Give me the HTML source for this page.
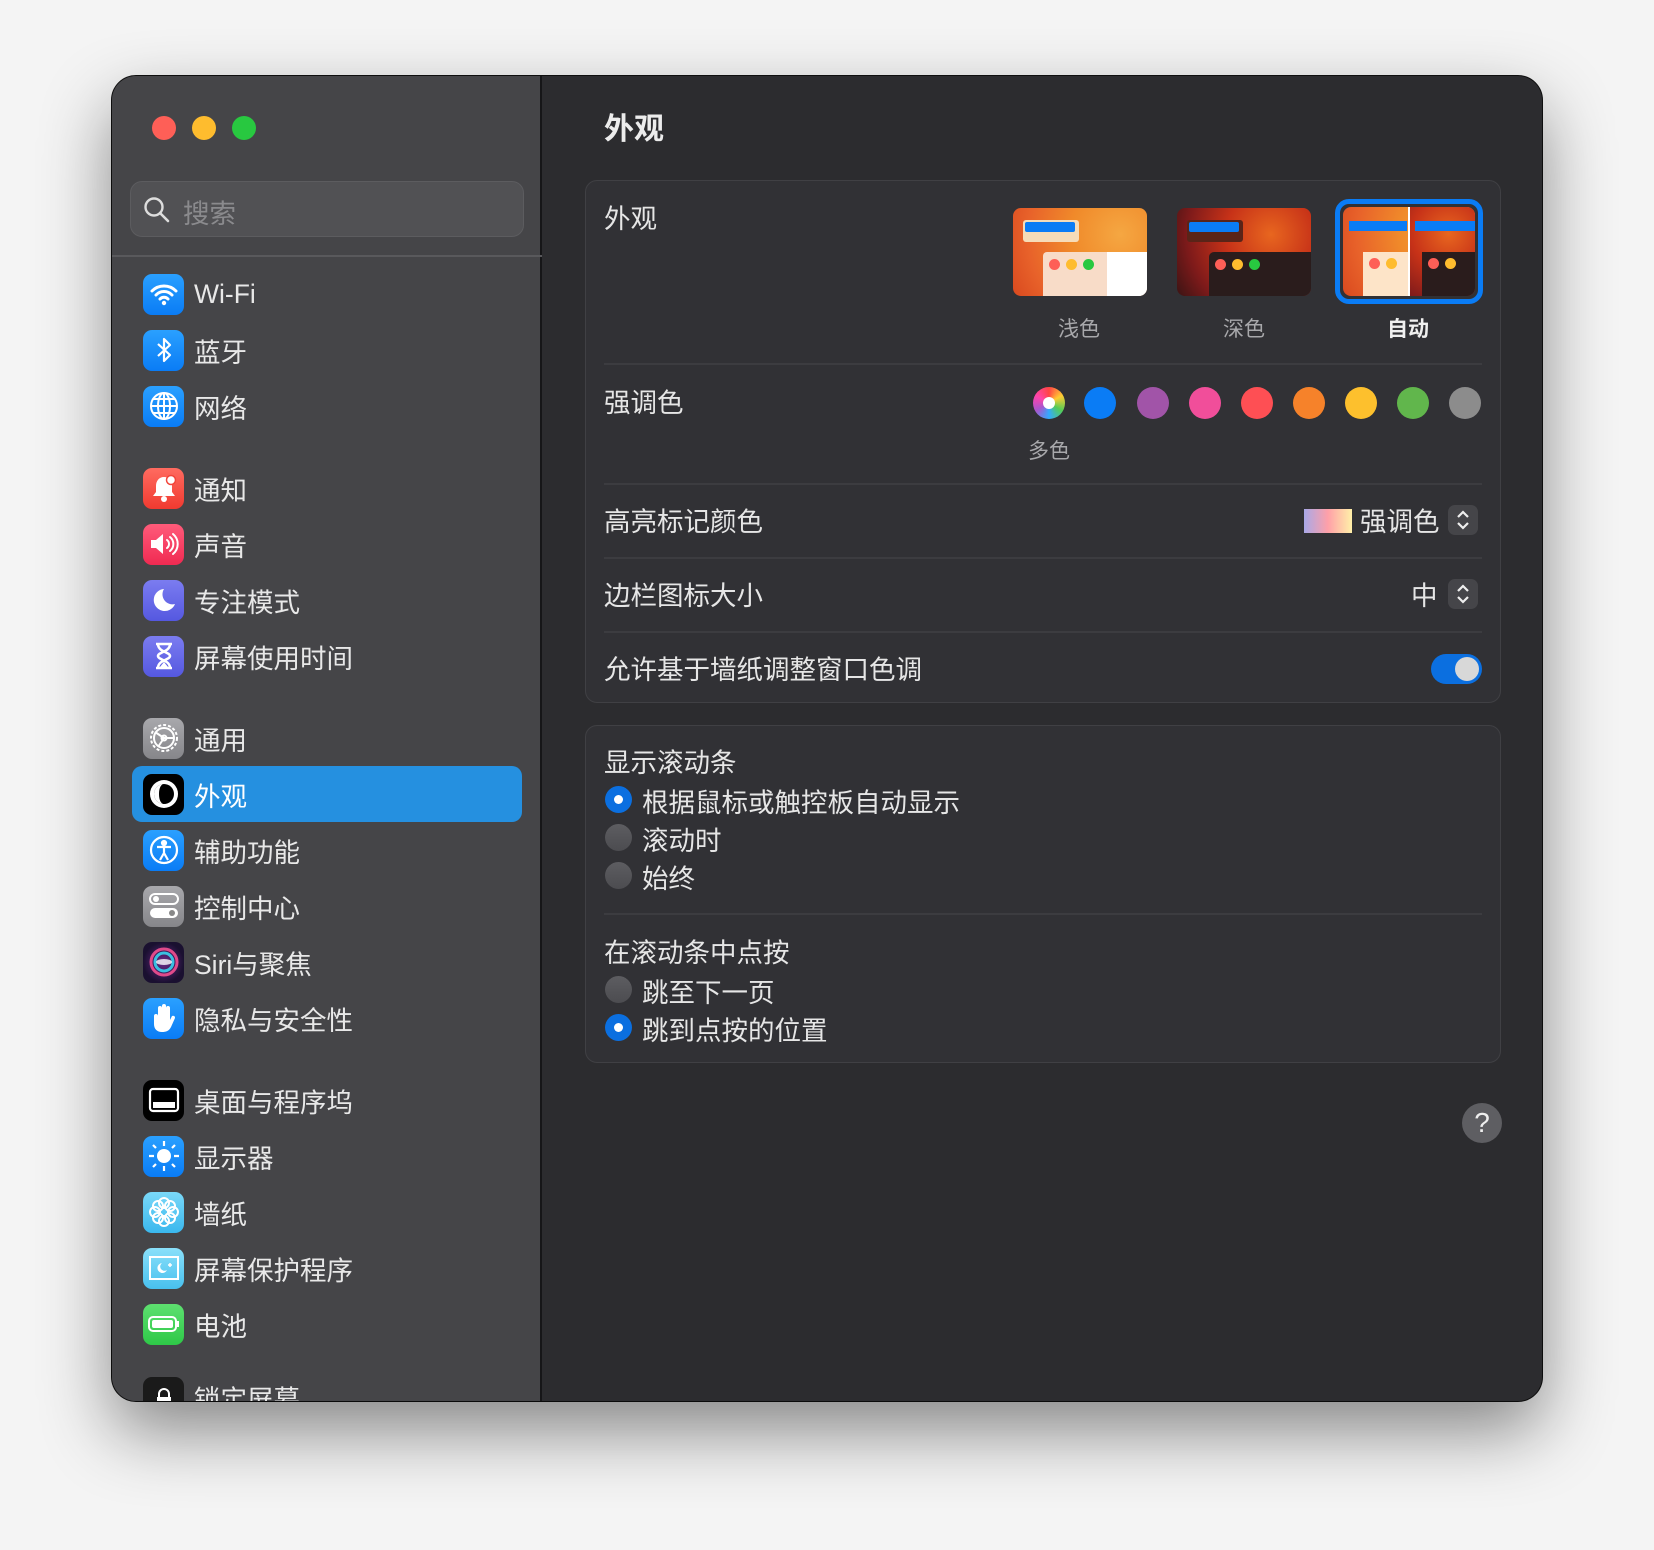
<!DOCTYPE html>
<html><head><meta charset="utf-8"><style>
*{margin:0;padding:0;box-sizing:border-box}
body{width:1654px;height:1550px;background:#f4f4f4;font-family:"Liberation Sans","Noto Sans CJK SC",sans-serif;position:relative;overflow:hidden;color:#e6e6e6}
.win{position:absolute;left:112px;top:76px;width:1430px;height:1325px;border-radius:24px;background:#2c2c2f;box-shadow:0 30px 70px rgba(0,0,0,.45),0 0 0 1px #111;overflow:hidden}
.side{position:absolute;left:0;top:0;width:430px;height:100%;background:#454548;border-right:2px solid #161618}
.a{position:absolute}
.tl{position:absolute;top:40px;width:24px;height:24px;border-radius:50%}
.search{position:absolute;left:18px;top:105px;width:394px;height:56px;border-radius:12px;background:#515154;border:1px solid #5c5c5f}
.sep{position:absolute;left:0;top:179px;width:430px;height:2px;background:#59595c}
.item{position:absolute;left:31px;height:42px;display:flex;align-items:center;font-size:26.5px;color:#e8e8e8}
.ic{width:41px;height:41px;border-radius:9px;margin-right:10px;display:flex;align-items:center;justify-content:center;flex:none}
.sel{position:absolute;left:20px;top:690px;width:390px;height:56px;border-radius:10px;background:#2590e0}
.card{position:absolute;left:473px;width:916px;border-radius:12px;background:#313135;border:1px solid #404044}
.lbl{position:absolute;font-size:26.5px;color:#e6e6e6;white-space:nowrap}
.hr{position:absolute;left:18px;width:878px;height:2px;background:#3c3c40}
.dot{position:absolute;width:32px;height:32px;border-radius:50%}
.radio{position:absolute;left:20px;width:27px;height:27px;border-radius:50%;background:linear-gradient(#5d5d61,#4c4c50)}
.radio.on{background:#0b6fe0}
.radio.on:after{content:"";position:absolute;left:9px;top:9px;width:9px;height:9px;border-radius:50%;background:#fff}
.thumb{position:absolute;width:134px;height:88px;border-radius:8px;overflow:hidden;background:radial-gradient(circle at 80% 30%,#f5a742 0,#f08a2a 40%,#e8622a 75%,#d9491f 100%)}
.dk{background:radial-gradient(circle at 70% 30%,#e8661f 0,#c73218 40%,#7d1a1a 75%,#3a1414 100%)}
</style></head><body>
<div class="win">
 <div class="side">
  <div class="tl" style="left:40px;background:#fe5f57"></div>
  <div class="tl" style="left:80px;background:#febc2e"></div>
  <div class="tl" style="left:120px;background:#28c840"></div>
  <div class="search">
   <svg class="a" style="left:12px;top:14px" width="28" height="28" viewBox="0 0 28 28"><circle cx="11" cy="11" r="8.5" fill="none" stroke="#ddd" stroke-width="2.4"/><path d="M17 17l8 8" stroke="#ddd" stroke-width="2.6" stroke-linecap="round"/></svg>
   <div class="a" style="left:52px;top:10px;font-size:26.5px;color:#8a8a8d">搜索</div>
  </div>
  <div class="sep"></div>
  <div class="sel"></div>

  <div class="item" style="top:197px"><div class="ic" style="background:linear-gradient(#2aa0ff,#0a7cf5)"><svg width="30" height="24" viewBox="0 0 30 24"><path d="M3 9a17 17 0 0 1 24 0M7 13a11 11 0 0 1 16 0M11 17a5.5 5.5 0 0 1 8 0" fill="none" stroke="#fff" stroke-width="3" stroke-linecap="round"/><circle cx="15" cy="21" r="2.2" fill="#fff"/></svg></div>Wi-Fi</div>
  <div class="item" style="top:253px"><div class="ic" style="background:linear-gradient(#2aa0ff,#0a7cf5)"><svg width="20" height="30" viewBox="0 0 20 30"><path d="M4 9l12 11-6 6V4l6 6-12 11" fill="none" stroke="#fff" stroke-width="2.2" stroke-linejoin="round"/></svg></div>蓝牙</div>
  <div class="item" style="top:309px"><div class="ic" style="background:linear-gradient(#2aa0ff,#0a7cf5)"><svg width="32" height="32" viewBox="0 0 32 32" fill="none" stroke="#fff" stroke-width="2"><circle cx="16" cy="16" r="13"/><ellipse cx="16" cy="16" rx="6" ry="13"/><path d="M3 16h26M5 9h22M5 23h22M16 3v26"/></svg></div>网络</div>

  <div class="item" style="top:391px"><div class="ic" style="background:linear-gradient(#ff6b60,#f03a30)"><svg width="28" height="28" viewBox="0 0 28 28"><path d="M14 3c-5 0-8 4-8 9v6l-3 4h22l-3-4v-6c0-5-3-9-8-9z" fill="#fff"/><circle cx="14" cy="25" r="3" fill="#fff"/><circle cx="21" cy="6" r="4.5" fill="#fff" stroke="#f2463b" stroke-width="1.5"/></svg></div>通知</div>
  <div class="item" style="top:447px"><div class="ic" style="background:linear-gradient(#ff5b7a,#f02a52)"><svg width="32" height="26" viewBox="0 0 32 26"><path d="M3 9h5l7-6v20l-7-6H3z" fill="#fff"/><path d="M19 9a5 5 0 0 1 0 8M22 6a9 9 0 0 1 0 14M25 3a13 13 0 0 1 0 20" fill="none" stroke="#fff" stroke-width="2" stroke-linecap="round"/></svg></div>声音</div>
  <div class="item" style="top:503px"><div class="ic" style="background:linear-gradient(#7b7cf0,#5558e0)"><svg width="28" height="28" viewBox="0 0 28 28"><path d="M14 3a11 11 0 1 0 11 15A10 10 0 0 1 14 3z" fill="#fff"/></svg></div>专注模式</div>
  <div class="item" style="top:559px"><div class="ic" style="background:linear-gradient(#7b7cf0,#5558e0)"><svg width="22" height="30" viewBox="0 0 22 30"><path d="M3 3h16M3 27h16M5 3c0 8 12 8 12 12s-12 4-12 12M17 3c0 8-12 8-12 12s12 4 12 12" fill="none" stroke="#fff" stroke-width="2.5"/><path d="M7 26l4-5 4 5z" fill="#fff"/></svg></div>屏幕使用时间</div>

  <div class="item" style="top:641px"><div class="ic" style="background:linear-gradient(#a8a8ac,#86868a)"><svg width="34" height="34" viewBox="0 0 34 34" fill="none" stroke="#fff" stroke-width="2"><circle cx="17" cy="17" r="13" stroke-dasharray="3 2"/><circle cx="17" cy="17" r="10"/><path d="M17 17L8 11M17 17L27 17M17 17L11 26"/><circle cx="17" cy="17" r="2.5"/></svg></div>通用</div>
  <div class="item" style="top:697px;color:#fff"><div class="ic" style="background:#000"><svg width="34" height="34" viewBox="0 0 34 34"><circle cx="17" cy="17" r="14" fill="#fff"/><circle cx="17" cy="17" r="10" fill="#000"/><path d="M17 7a10 10 0 0 0 0 20c-3 0-5-4-5-10s2-10 5-10z" fill="#fff"/></svg></div>外观</div>
  <div class="item" style="top:753px"><div class="ic" style="background:linear-gradient(#2aa0ff,#0a7cf5)"><svg width="32" height="32" viewBox="0 0 32 32" fill="none" stroke="#fff" stroke-width="2.2"><circle cx="16" cy="16" r="13"/><circle cx="16" cy="9" r="2" fill="#fff"/><path d="M9 13h14M16 13v6l-4 7M16 19l4 7"/></svg></div>辅助功能</div>
  <div class="item" style="top:809px"><div class="ic" style="background:linear-gradient(#a8a8ac,#86868a)"><svg width="32" height="28" viewBox="0 0 32 28"><rect x="2" y="2" width="28" height="10" rx="5" fill="none" stroke="#fff" stroke-width="2"/><circle cx="8" cy="7" r="3" fill="#fff"/><rect x="2" y="16" width="28" height="10" rx="5" fill="#fff"/><circle cx="24" cy="21" r="3" fill="#888"/></svg></div>控制中心</div>
  <div class="item" style="top:865px"><div class="ic" style="background:radial-gradient(circle,#6a2a8a 0,#1a1030 70%)"><svg width="34" height="34" viewBox="0 0 34 34"><circle cx="17" cy="17" r="13" fill="none" stroke="#e04a8a" stroke-width="3"/><circle cx="17" cy="17" r="9" fill="none" stroke="#3ac0e0" stroke-width="3"/><ellipse cx="17" cy="17" rx="8" ry="3" fill="#fff" opacity=".8"/></svg></div>Siri与聚焦</div>
  <div class="item" style="top:921px"><div class="ic" style="background:linear-gradient(#2aa0ff,#0a7cf5)"><svg width="28" height="32" viewBox="0 0 28 32"><path d="M8 16V6a2 2 0 0 1 4 0v8V4a2 2 0 0 1 4 0v10V6a2 2 0 0 1 4 0v12l2-4a2 2 0 0 1 3 2l-4 9c-2 4-5 5-9 5-5 0-8-3-8-8v-8a2 2 0 0 1 4 0z" fill="#fff"/></svg></div>隐私与安全性</div>

  <div class="item" style="top:1003px"><div class="ic" style="background:#000"><svg width="32" height="26" viewBox="0 0 32 26"><rect x="2" y="2" width="28" height="22" rx="3" fill="none" stroke="#fff" stroke-width="2.2"/><rect x="5" y="15" width="22" height="6" fill="#fff"/></svg></div>桌面与程序坞</div>
  <div class="item" style="top:1059px"><div class="ic" style="background:linear-gradient(#2aa0ff,#0a7cf5)"><svg width="34" height="34" viewBox="0 0 34 34"><circle cx="17" cy="17" r="7" fill="#fff"/><path d="M17 2v5M17 27v5M2 17h5M27 17h5M6 6l3 3M25 25l3 3M6 28l3-3M25 9l3-3" stroke="#fff" stroke-width="2.2"/></svg></div>显示器</div>
  <div class="item" style="top:1115px"><div class="ic" style="background:linear-gradient(#7ad8f8,#3ab8ee)"><svg width="34" height="34" viewBox="0 0 34 34" fill="none" stroke="#fff" stroke-width="2"><circle cx="17" cy="8" r="5"/><circle cx="17" cy="26" r="5"/><circle cx="8" cy="17" r="5"/><circle cx="26" cy="17" r="5"/><circle cx="11" cy="11" r="5"/><circle cx="23" cy="23" r="5"/><circle cx="23" cy="11" r="5"/><circle cx="11" cy="23" r="5"/></svg></div>墙纸</div>
  <div class="item" style="top:1171px"><div class="ic" style="background:linear-gradient(#8ae0fa,#48c0ee)"><svg width="32" height="26" viewBox="0 0 32 26"><rect x="2" y="2" width="28" height="22" fill="none" stroke="#fff" stroke-width="2"/><path d="M14 8a5 5 0 1 0 5 7 4 4 0 0 1-5-7z" fill="#fff"/><path d="M22 8v4M20 10h4" stroke="#fff" stroke-width="1.5"/></svg></div>屏幕保护程序</div>
  <div class="item" style="top:1227px"><div class="ic" style="background:linear-gradient(#5ee070,#2ec848)"><svg width="34" height="20" viewBox="0 0 34 20"><rect x="2" y="3" width="27" height="14" rx="4" fill="none" stroke="#fff" stroke-width="2"/><rect x="5" y="6" width="21" height="8" rx="2" fill="#fff"/><rect x="30" y="7" width="2" height="6" fill="#fff"/></svg></div>电池</div>
  <div class="item" style="top:1300px"><div class="ic" style="background:#1a1a1a"><svg width="20" height="20" viewBox="0 0 20 20"><path d="M5 10V7a5 5 0 0 1 10 0v3" fill="none" stroke="#fff" stroke-width="2"/><rect x="3" y="10" width="14" height="10" fill="#fff"/></svg></div>锁定屏幕</div>
 </div>

 <div class="a" style="left:492px;top:28px;font-size:30px;font-weight:bold;color:#ececec">外观</div>

 <div class="card" style="top:104px;height:523px">
  <div class="lbl" style="left:18px;top:16px">外观</div>
  <div class="thumb" style="left:427px;top:27px">
   <div class="a" style="left:10px;top:12px;width:56px;height:22px;background:#f6dcb8;border-radius:3px"></div>
   <div class="a" style="left:12px;top:14px;width:50px;height:10px;background:#0a7cf5;border-radius:2px"></div>
   <div class="a" style="left:30px;top:44px;width:104px;height:44px;background:#f8dcc8;border-radius:4px 0 0 0"></div>
   <div class="a" style="left:94px;top:44px;width:40px;height:44px;background:#fff"></div>
   <div class="dot" style="left:36px;top:51px;width:11px;height:11px;background:#fe5f57"></div>
   <div class="dot" style="left:53px;top:51px;width:11px;height:11px;background:#febc2e"></div>
   <div class="dot" style="left:70px;top:51px;width:11px;height:11px;background:#28c840"></div>
  </div>
  <div class="thumb dk" style="left:591px;top:27px">
   <div class="a" style="left:10px;top:12px;width:56px;height:22px;background:#5a2418;border-radius:3px"></div>
   <div class="a" style="left:12px;top:14px;width:50px;height:10px;background:#0a7cf5;border-radius:2px"></div>
   <div class="a" style="left:32px;top:44px;width:102px;height:44px;background:#2a1c1c;border-radius:5px 0 0 0"></div>
   <div class="dot" style="left:38px;top:51px;width:11px;height:11px;background:#fe5f57"></div>
   <div class="dot" style="left:55px;top:51px;width:11px;height:11px;background:#febc2e"></div>
   <div class="dot" style="left:72px;top:51px;width:11px;height:11px;background:#28c840"></div>
  </div>
  <div class="a" style="left:749px;top:18px;width:148px;height:105px;border-radius:14px;border:5px solid #0a7cf5"></div>
  <div class="thumb" style="left:757px;top:26px;width:132px;height:89px">
   <div class="a" style="left:66px;top:0;width:66px;height:89px;background:radial-gradient(circle at 60% 30%,#e8661f 0,#c73218 50%,#7d1a1a 100%)"></div>
   <div class="a" style="left:65px;top:0;width:2px;height:89px;background:#fff"></div>
   <div class="a" style="left:6px;top:14px;width:58px;height:10px;background:#0a7cf5"></div>
   <div class="a" style="left:72px;top:14px;width:60px;height:10px;background:#0a7cf5"></div>
   <div class="a" style="left:20px;top:45px;width:45px;height:44px;background:#fde4c8"></div>
   <div class="a" style="left:79px;top:45px;width:53px;height:44px;background:#2a1c1c"></div>
   <div class="dot" style="left:26px;top:51px;width:11px;height:11px;background:#fe5f57"></div>
   <div class="dot" style="left:43px;top:51px;width:11px;height:11px;background:#febc2e"></div>
   <div class="dot" style="left:85px;top:51px;width:11px;height:11px;background:#fe5f57"></div>
   <div class="dot" style="left:102px;top:51px;width:11px;height:11px;background:#febc2e"></div>
  </div>
  <div class="lbl" style="left:472px;top:132px;font-size:21px;color:#a8a8ab">浅色</div>
  <div class="lbl" style="left:637px;top:132px;font-size:21px;color:#a8a8ab">深色</div>
  <div class="lbl" style="left:801px;top:132px;font-size:21px;color:#f0f0f0;font-weight:bold">自动</div>
  <div class="hr" style="top:182px"></div>

  <div class="lbl" style="left:18px;top:200px">强调色</div>
  <div class="dot" style="left:447px;top:206px;background:conic-gradient(#f44,#fc3,#5c5,#3af,#a5c,#f4a,#f44)"></div>
  <div class="dot" style="left:457px;top:216px;width:12px;height:12px;background:#fff"></div>
  <div class="dot" style="left:498px;top:206px;background:#0a7cf5"></div>
  <div class="dot" style="left:551px;top:206px;background:#a154a8"></div>
  <div class="dot" style="left:603px;top:206px;background:#f14e9a"></div>
  <div class="dot" style="left:655px;top:206px;background:#fe4f54"></div>
  <div class="dot" style="left:707px;top:206px;background:#f6822a"></div>
  <div class="dot" style="left:759px;top:206px;background:#fdc02d"></div>
  <div class="dot" style="left:811px;top:206px;background:#61b64c"></div>
  <div class="dot" style="left:863px;top:206px;background:#8c8c8c"></div>
  <div class="lbl" style="left:442px;top:254px;font-size:21px;color:#a8a8ab">多色</div>
  <div class="hr" style="top:302px"></div>

  <div class="lbl" style="left:18px;top:319px">高亮标记颜色</div>
  <div class="a" style="left:718px;top:328px;width:48px;height:24px;background:linear-gradient(90deg,#a8a8e8,#ffa0a8,#fff0a8)"></div>
  <div class="lbl" style="left:774px;top:319px">强调色</div>
  <div class="a" style="left:862px;top:324px;width:30px;height:30px;border-radius:7px;background:#454549"><svg width="30" height="30" viewBox="0 0 30 30"><path d="M10 12l5-5 5 5M10 18l5 5 5-5" fill="none" stroke="#eee" stroke-width="2.2"/></svg></div>
  <div class="hr" style="top:376px"></div>

  <div class="lbl" style="left:18px;top:393px">边栏图标大小</div>
  <div class="lbl" style="left:825px;top:393px">中</div>
  <div class="a" style="left:862px;top:398px;width:30px;height:30px;border-radius:7px;background:#454549"><svg width="30" height="30" viewBox="0 0 30 30"><path d="M10 12l5-5 5 5M10 18l5 5 5-5" fill="none" stroke="#eee" stroke-width="2.2"/></svg></div>
  <div class="hr" style="top:450px"></div>

  <div class="lbl" style="left:18px;top:467px">允许基于墙纸调整窗口色调</div>
  <div class="a" style="left:845px;top:473px;width:51px;height:30px;border-radius:15px;background:#0b6fe0"><div class="a" style="left:24px;top:3px;width:24px;height:24px;border-radius:50%;background:#d8d8d8"></div></div>
 </div>

 <div class="card" style="top:649px;height:338px">
  <div class="lbl" style="left:18px;top:15px">显示滚动条</div>
  <div class="radio on" style="top:60px;left:19px"></div><div class="lbl" style="left:56px;top:55px">根据鼠标或触控板自动显示</div>
  <div class="radio" style="top:98px;left:19px"></div><div class="lbl" style="left:56px;top:93px">滚动时</div>
  <div class="radio" style="top:136px;left:19px"></div><div class="lbl" style="left:56px;top:131px">始终</div>
  <div class="hr" style="top:187px"></div>
  <div class="lbl" style="left:18px;top:205px">在滚动条中点按</div>
  <div class="radio" style="top:250px;left:19px"></div><div class="lbl" style="left:56px;top:245px">跳至下一页</div>
  <div class="radio on" style="top:288px;left:19px"></div><div class="lbl" style="left:56px;top:283px">跳到点按的位置</div>
 </div>

 <div class="a" style="left:1350px;top:1027px;width:40px;height:40px;border-radius:50%;background:#5e5e62;color:#eee;font-size:28px;text-align:center;line-height:40px">?</div>
</div>
</body></html>
